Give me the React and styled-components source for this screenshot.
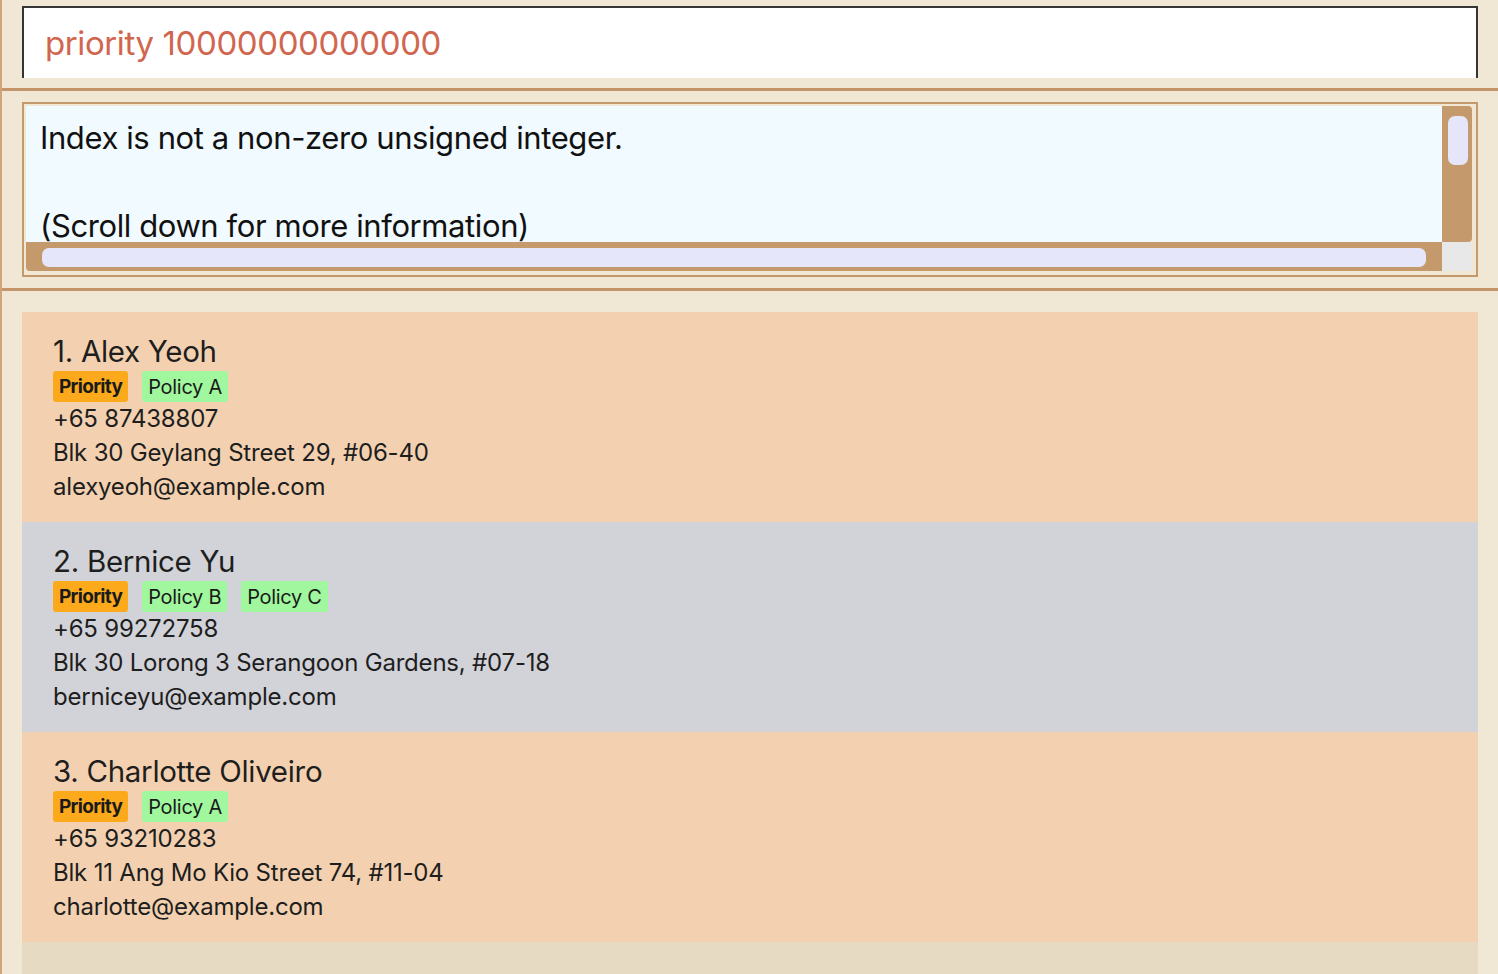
import React from 'react';
import styled, { createGlobalStyle } from 'styled-components';

const GlobalStyle = createGlobalStyle`
  html, body {
    margin: 0;
    padding: 0;
    background: #f0e7d5;
  }
  body {
    font-family: Inter, 'Noto Sans', sans-serif;
    color: #1e1e1e;
  }
`;

const Window = styled.div`
  width: 1496px;
  height: 974px;
  border-left: 2px solid #d3a47c;
  background: #f0e7d5;
  display: flex;
  flex-direction: column;
  overflow: hidden;
`;

const CommandArea = styled.div`
  padding: 6px 20px 10px 20px;
`;

const CommandBox = styled.div`
  height: 70px;
  background: #ffffff;
  border: 2px solid #353535;
  border-bottom: none;
  display: flex;
  align-items: center;
  padding-left: 21px;
  font-size: 33px;
  letter-spacing: -0.4px;
  color: #d1664f;
`;

const Separator = styled.div`
  height: 3px;
  background: #c4956a;
  flex-shrink: 0;
`;

const ResultArea = styled.div`
  padding: 11px 20px 11px 20px;
`;

const ResultFrame = styled.div`
  border: 2px solid #c4996c;
  padding: 2px 4px 4px 2px;
  display: grid;
  grid-template-columns: 1fr 30px;
  grid-template-rows: 136px 29px;
`;

const Viewport = styled.div`
  background: #f0faff;
  overflow: hidden;
`;

const ResultText = styled.div`
  padding: 10px 0 0 14px;
  font-size: 31px;
  line-height: 44px;
  letter-spacing: -0.4px;
  color: #111;
  white-space: pre;
`;

const ScrollTrack = styled.div`
  background: #c49a6c;
  border-radius: ${p => (p.$vertical ? '0 4px 4px 0' : '0 0 0 4px')};
  padding: ${p => (p.$vertical ? '10px 4px 0 6px' : '6px 16px 4px 16px')};
  display: flex;
  flex-direction: ${p => (p.$vertical ? 'column' : 'row')};
`;

const ScrollThumb = styled.div`
  background: #e6e6fa;
  border-radius: 7px;
  ${p => (p.$vertical ? 'height: 49px;' : 'flex: 1;')}
`;

const ScrollCorner = styled.div`
  background: #e8e8e8;
`;

const ListArea = styled.div`
  flex: 1;
  padding: 21px 20px 0 20px;
  display: flex;
  flex-direction: column;
`;

const List = styled.div`
  flex: 1;
  background: #e6dac3;
  display: flex;
  flex-direction: column;
`;

const Card = styled.div`
  height: 210px;
  box-sizing: border-box;
  padding: 20px 31px 0 31px;
  background: ${p => (p.$alt ? '#d2d3d8' : '#f3d1b0')};
  display: flex;
  flex-direction: column;
`;

const Name = styled.div`
  font-size: 29.5px;
  line-height: 38px;
  letter-spacing: -0.3px;
  color: #1e1e1e;
`;

const Tags = styled.div`
  display: flex;
  gap: 14px;
  margin-top: 1px;
  height: 31px;
`;

const Tag = styled.span`
  display: inline-flex;
  align-items: center;
  padding: 0 6px;
  height: 31px;
  border-radius: 3px;
  font-size: ${p => (p.$priority ? '19px' : '20px')};
  letter-spacing: ${p => (p.$priority ? '-0.7px' : '-0.3px')};
  background: ${p => (p.$priority ? '#fcaa1c' : '#a0f79e')};
  font-weight: ${p => (p.$priority ? 700 : 400)};
  color: #1a1a1a;
`;

const Detail = styled.div`
  font-size: 24px;
  line-height: 34px;
  letter-spacing: -0.2px;
  color: #1e1e1e;
`;

const persons = [
  {
    name: 'Alex Yeoh',
    tags: ['Policy A'],
    phone: '+65 87438807',
    address: 'Blk 30 Geylang Street 29, #06-40',
    email: 'alexyeoh@example.com',
  },
  {
    name: 'Bernice Yu',
    tags: ['Policy B', 'Policy C'],
    phone: '+65 99272758',
    address: 'Blk 30 Lorong 3 Serangoon Gardens, #07-18',
    email: 'berniceyu@example.com',
  },
  {
    name: 'Charlotte Oliveiro',
    tags: ['Policy A'],
    phone: '+65 93210283',
    address: 'Blk 11 Ang Mo Kio Street 74, #11-04',
    email: 'charlotte@example.com',
  },
];

export default function App() {
  return (
    <>
      <GlobalStyle />
      <Window>
        <CommandArea>
          <CommandBox>priority 10000000000000</CommandBox>
        </CommandArea>
        <Separator />
        <ResultArea>
          <ResultFrame>
            <Viewport>
              <ResultText>
                {'Index is not a non-zero unsigned integer.\n\n(Scroll down for more information)'}
              </ResultText>
            </Viewport>
            <ScrollTrack $vertical>
              <ScrollThumb $vertical />
            </ScrollTrack>
            <ScrollTrack>
              <ScrollThumb />
            </ScrollTrack>
            <ScrollCorner />
          </ResultFrame>
        </ResultArea>
        <Separator />
        <ListArea>
          <List>
            {persons.map((p, i) => (
              <Card key={p.email} $alt={i % 2 === 1}>
                <Name>{`${i + 1}. ${p.name}`}</Name>
                <Tags>
                  <Tag $priority>Priority</Tag>
                  {p.tags.map(t => (
                    <Tag key={t}>{t}</Tag>
                  ))}
                </Tags>
                <Detail>{p.phone}</Detail>
                <Detail>{p.address}</Detail>
                <Detail>{p.email}</Detail>
              </Card>
            ))}
          </List>
        </ListArea>
      </Window>
    </>
  );
}
